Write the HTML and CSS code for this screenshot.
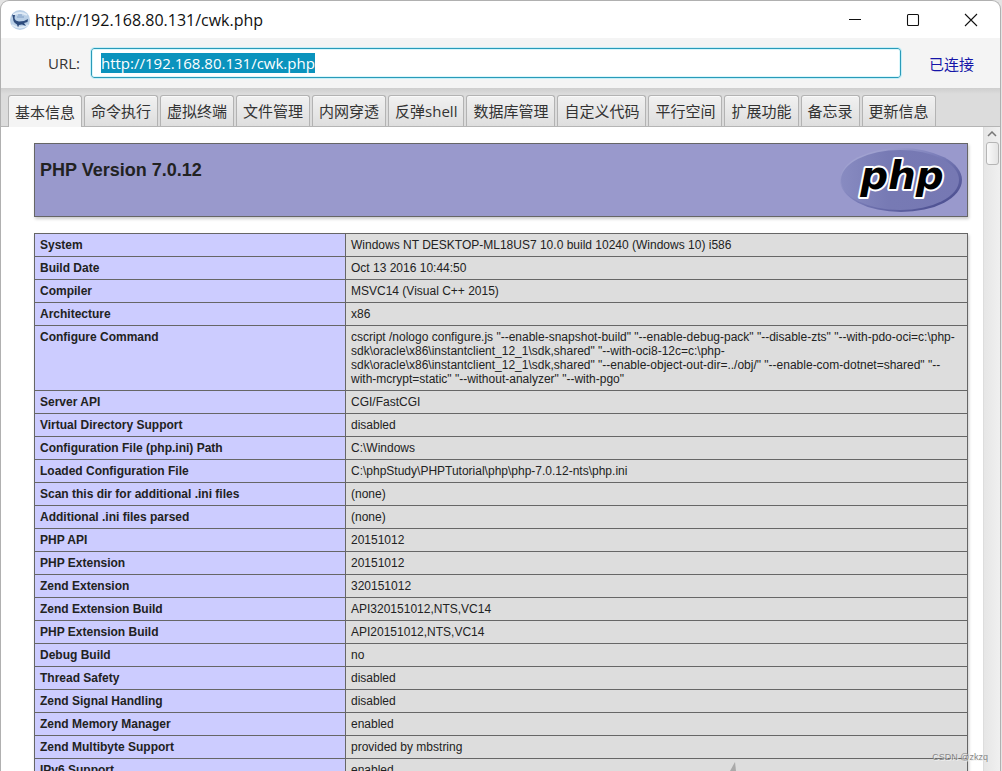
FILE: index.html
```html
<!DOCTYPE html>
<html lang="zh-CN">
<head>
<meta charset="utf-8">
<title>http://192.168.80.131/cwk.php</title>
<link rel="stylesheet" href="styles.css">
</head>
<body>
<div class="window">
  <header class="titlebar">
    <svg class="app-icon" viewBox="0 0 20 20" aria-hidden="true">
      <circle cx="10" cy="10" r="10" fill="#b9cfe6"/>
      <path d="M3 5Q10 1 17 5M2 15Q10 20 18 15" fill="none" stroke="#dfeaf5" stroke-width="2"/>
      <path d="M2 4L3 5L5 5L4.500 8Q5 11 9 11.500L14 11L18 9L17.500 12L14 13L16 16L12 14.500L9 15L8 17.500L7 14.500Q3 12.500 3 8Z" fill="#2d4b7c"/>
      <path d="M7 7H14M8 5H12" stroke="#7f9dc4" stroke-width="1"/>
    </svg>
    <h1 class="title">http://192.168.80.131/cwk.php</h1>
    <div class="controls">
      <button class="control" type="button" aria-label="Minimize"><svg viewBox="0 0 14 14"><path d="M1 6.500H13"/></svg></button>
      <button class="control" type="button" aria-label="Maximize"><svg viewBox="0 0 14 14"><rect x="1.500" y="1.500" width="11" height="11" rx="1"/></svg></button>
      <button class="control" type="button" aria-label="Close"><svg viewBox="0 0 14 14"><path d="M1 1L13 13M13 1L1 13"/></svg></button>
    </div>
  </header>
  <div class="address">
    <label class="address-label" for="url">URL:</label>
    <input class="address-input" id="url" type="text" value="http://192.168.80.131/cwk.php" spellcheck="false" autofocus>
    <span class="status">已连接</span>
  </div>
  <nav class="tabs" role="tablist">
    <button class="tab tab-active" type="button" role="tab" aria-selected="true">基本信息</button>
    <button class="tab" type="button" role="tab">命令执行</button>
    <button class="tab" type="button" role="tab">虚拟终端</button>
    <button class="tab" type="button" role="tab">文件管理</button>
    <button class="tab" type="button" role="tab">内网穿透</button>
    <button class="tab" type="button" role="tab">反弹shell</button>
    <button class="tab" type="button" role="tab">数据库管理</button>
    <button class="tab" type="button" role="tab">自定义代码</button>
    <button class="tab" type="button" role="tab">平行空间</button>
    <button class="tab" type="button" role="tab">扩展功能</button>
    <button class="tab" type="button" role="tab">备忘录</button>
    <button class="tab" type="button" role="tab">更新信息</button>
  </nav>
  <div class="view">
    <main class="page">
      <section class="banner">
        <h2 class="version">PHP Version 7.0.12</h2>
        <svg class="logo" viewBox="0 0 122 66" role="img" aria-label="PHP logo">
          <defs>
            <linearGradient id="rim" x1="0" y1="0" x2="1" y2="1">
              <stop offset="0" stop-color="#b4b5dc"/><stop offset=".45" stop-color="#7c7fba"/><stop offset="1" stop-color="#3f4285"/>
            </linearGradient>
            <linearGradient id="face" x1="0" y1="0" x2="1" y2="0">
              <stop offset="0" stop-color="#888bc1"/><stop offset=".4" stop-color="#777ab4"/><stop offset="1" stop-color="#7678b3"/>
            </linearGradient>
          </defs>
          <ellipse cx="61" cy="32" rx="61" ry="32" fill="url(#rim)"/>
          <ellipse cx="60" cy="32" rx="59" ry="30" fill="url(#face)"/>
          <text class="logo-text" x="62" y="41" text-anchor="middle">php</text>
        </svg>
      </section>
      <table class="info">
        <tbody>
          <tr><th scope="row">System</th><td>Windows NT DESKTOP-ML18US7 10.0 build 10240 (Windows 10) i586</td></tr>
          <tr><th scope="row">Build Date</th><td>Oct 13 2016 10:44:50</td></tr>
          <tr><th scope="row">Compiler</th><td>MSVC14 (Visual C++ 2015)</td></tr>
          <tr><th scope="row">Architecture</th><td>x86</td></tr>
          <tr><th scope="row">Configure Command</th><td>cscript /nologo configure.js "--enable-snapshot-build" "--enable-debug-pack" "--disable-zts" "--with-pdo-oci=c:\php-sdk\oracle\x86\instantclient_12_1\sdk,shared" "--with-oci8-12c=c:\php-sdk\oracle\x86\instantclient_12_1\sdk,shared" "--enable-object-out-dir=../obj/" "--enable-com-dotnet=shared" "--with-mcrypt=static" "--without-analyzer" "--with-pgo"</td></tr>
          <tr><th scope="row">Server API</th><td>CGI/FastCGI</td></tr>
          <tr><th scope="row">Virtual Directory Support</th><td>disabled</td></tr>
          <tr><th scope="row">Configuration File (php.ini) Path</th><td>C:\Windows</td></tr>
          <tr><th scope="row">Loaded Configuration File</th><td>C:\phpStudy\PHPTutorial\php\php-7.0.12-nts\php.ini</td></tr>
          <tr><th scope="row">Scan this dir for additional .ini files</th><td>(none)</td></tr>
          <tr><th scope="row">Additional .ini files parsed</th><td>(none)</td></tr>
          <tr><th scope="row">PHP API</th><td>20151012</td></tr>
          <tr><th scope="row">PHP Extension</th><td>20151012</td></tr>
          <tr><th scope="row">Zend Extension</th><td>320151012</td></tr>
          <tr><th scope="row">Zend Extension Build</th><td>API320151012,NTS,VC14</td></tr>
          <tr><th scope="row">PHP Extension Build</th><td>API20151012,NTS,VC14</td></tr>
          <tr><th scope="row">Debug Build</th><td>no</td></tr>
          <tr><th scope="row">Thread Safety</th><td>disabled</td></tr>
          <tr><th scope="row">Zend Signal Handling</th><td>disabled</td></tr>
          <tr><th scope="row">Zend Memory Manager</th><td>enabled</td></tr>
          <tr><th scope="row">Zend Multibyte Support</th><td>provided by mbstring</td></tr>
          <tr><th scope="row">IPv6 Support</th><td>enabled</td></tr>
        </tbody>
      </table>
    </main>
    <div class="scrollbar" aria-hidden="true">
      <svg class="scroll-arrow" viewBox="0 0 10 6"><path d="M1 5L5 1L9 5" fill="none" stroke="#777" stroke-width="1.5"/></svg>
      <div class="scroll-thumb"></div>
    </div>
  </div>
  <svg class="cursor" viewBox="0 0 7 9" aria-hidden="true"><path d="M0 9L5 0L6 9Z" fill="#aaa"/></svg>
  <span class="watermark">CSDN @zkzq</span>
</div>
<script src="script.js"></script>
</body>
</html>
```
FILE: styles.css
```css
* { box-sizing: border-box; }

body {
  margin: 0;
  background: #e4e4e4;
  color: #222;
  font-family: "Open Sans", "Noto Sans CJK SC", sans-serif;
}

.window {
  position: relative;
  display: flex;
  flex-direction: column;
  height: 100vh;
  margin-right: 1px;
  overflow: hidden;
  border: 1px solid #b0b0b0;
  border-bottom: 0;
  border-radius: 9px 9px 0 0;
  background: #fff;
}

.titlebar {
  display: flex;
  flex: none;
  align-items: center;
  height: 37px;
  padding-left: 9px;
}

.app-icon { width: 20px; height: 20px; }

.title {
  flex: 1;
  margin: 0 0 0 5px;
  color: #111;
  font-size: 16px;
  font-weight: 400;
  line-height: 20px;
}

.controls { display: flex; }

.control {
  display: grid;
  place-items: center;
  width: 58px;
  height: 36px;
  padding: 0;
  border: 0;
  background: none;
}

.control svg {
  width: 14px;
  height: 14px;
  fill: none;
  stroke: #111;
  stroke-width: 1.1;
}

.address {
  display: flex;
  flex: none;
  align-items: center;
  height: 50px;
  padding: 0 26px 0 47px;
  background: #f4f4f4;
  font-size: 15px;
}

.address-label { color: #333; }

.address-input {
  flex: 1;
  min-width: 0;
  height: 30px;
  margin: 0 28px 0 11px;
  padding: 0 9px;
  border: 1px solid #2a9ab8;
  border-radius: 3px;
  outline: 1px solid #c5eff8;
  background: #fff;
  box-shadow: inset 0 0 0 1px #d9f7fc;
  color: #333;
  font: inherit;
}

.address-input::selection { background: #0b93bd; color: #fff; }

.status { color: #1515a8; }

.tabs {
  display: flex;
  flex: none;
  gap: 2px;
  height: 39px;
  padding: 7px 7px 0;
  border-bottom: 1px solid #b5b5b5;
  background: linear-gradient(#cecece, #dcdcdc 6px, #dcdcdc);
}

.tab {
  flex: none;
  height: 31px;
  padding: 0 6px;
  border: 1px solid #b3b3b3;
  border-bottom: 0;
  border-radius: 3px 3px 0 0;
  background: linear-gradient(#f1f1f1, #dedede);
  box-shadow: inset 0 1px #fafafa;
  color: #333;
  font: 15px/28px "Open Sans", "Noto Sans CJK SC", sans-serif;
  white-space: nowrap;
}

.tab-active {
  height: 32px;
  background: #f4f4f4;
}

.view {
  display: flex;
  flex: 1;
  min-height: 0;
}

.page {
  flex: 1;
  min-width: 0;
  overflow: hidden;
  padding: 16px 15px 0 33px;
  font-family: "Liberation Sans", Arial, sans-serif;
}

.banner {
  display: flex;
  justify-content: space-between;
  height: 74px;
  margin-bottom: 16px;
  padding: 4px 5px;
  border: 1px solid #666;
  background: #9999cc;
  box-shadow: 1px 2px 3px #ccc;
}

.version {
  margin: 11px 0 0;
  font-size: 18px;
  line-height: 22px;
}

.logo { width: 122px; height: 66px; }

.logo-text {
  fill: #000;
  stroke: #fff;
  stroke-width: 4px;
  stroke-linejoin: round;
  paint-order: stroke;
  font: italic bold 39px "DejaVu Sans", sans-serif;
}

.info {
  width: 100%;
  border-collapse: collapse;
  box-shadow: 1px 2px 3px #ccc;
  font-size: 12px;
  line-height: 14px;
}

.info th,
.info td {
  padding: 4px 5px;
  border: 1px solid #666;
  text-align: left;
  vertical-align: top;
}

.info th { width: 311px; background: #ccccff; }

.info td { background: #ddd; overflow-wrap: anywhere; }

.scrollbar {
  display: flex;
  flex: none;
  flex-direction: column;
  align-items: center;
  gap: 5px;
  width: 17px;
  padding-top: 4px;
  border-left: 1px solid #ddd;
  background: linear-gradient(90deg, #e6e6e6, #f0f0f0);
}

.scroll-arrow { width: 10px; height: 6px; }

.scroll-thumb {
  width: 13px;
  height: 23px;
  border: 1px solid #b5b5b5;
  border-radius: 3px;
  background: linear-gradient(90deg, #fafafa, #e4e4e4);
}

.cursor {
  position: absolute;
  right: 263px;
  bottom: 0;
  width: 7px;
  height: 9px;
}

.watermark {
  position: absolute;
  right: 12px;
  bottom: 8px;
  color: #888;
  font: 9px/12px "Liberation Sans", Arial, sans-serif;
  text-shadow: 1px 1px #eee;
}
```
FILE: script.js
```js
const url = document.getElementById("url");
url.focus();
url.select();
```
